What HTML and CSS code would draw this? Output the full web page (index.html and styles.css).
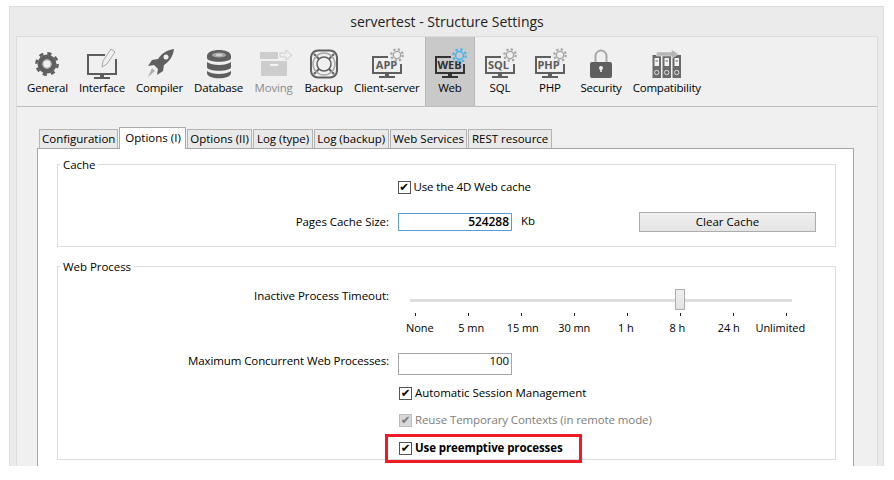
FILE: index.html
```html
<!DOCTYPE html>
<html lang="en">
<head>
<meta charset="utf-8">
<title>servertest - Structure Settings</title>
<link rel="stylesheet" href="styles.css">
</head>
<body>
<svg class="defs" width="0" height="0" aria-hidden="true">
  <defs>
    <symbol id="cog" viewBox="0 0 16 16">
      <circle cx="8" cy="8" r="6.6" fill="none" stroke="currentColor" stroke-width="2.4" stroke-dasharray="2.6 2.58"/>
      <circle cx="8" cy="8" r="4.2" fill="none" stroke="currentColor" stroke-width="1.6"/>
    </symbol>
    <symbol id="screen" viewBox="0 0 40 36">
      <path d="M21 12H6v16h28V19" fill="none" stroke="currentColor" stroke-width="2"/>
      <path d="M18 28h4v3h-4zM12 31h16v2H12z" fill="currentColor"/>
    </symbol>
  </defs>
</svg>
<main class="window">
  <header class="title">servertest - Structure Settings</header>
  <div class="pane">
    <nav class="toolbar">
      <a class="tool">
        <svg class="icon" viewBox="0 0 40 36">
          <circle cx="20" cy="19" r="10.6" fill="none" stroke="#5f5f5f" stroke-width="2.6" stroke-dasharray="4.2 4.13"/>
          <circle cx="20" cy="19" r="7" fill="none" stroke="#5f5f5f" stroke-width="5"/>
          <circle cx="20" cy="19" r="4" fill="none" stroke="#b5b5b5" stroke-width="1.2"/>
        </svg>
        <span>General</span>
      </a>
      <a class="tool">
        <svg class="icon" viewBox="0 0 40 36">
          <path d="M23 10H6v19h28V14" fill="none" stroke="#5c5c5c" stroke-width="2"/>
          <path d="M18 29h4v3h-4zM12 32h16v2H12z" fill="#5c5c5c"/>
          <path d="M29 4l4 3-8 12-5 3 1-6z" fill="#f0f0f0" stroke="#a8a8a8" stroke-width="1"/>
        </svg>
        <span>Interface</span>
      </a>
      <a class="tool">
        <svg class="icon" viewBox="0 0 40 36">
          <path d="M34 4c-7 1-12 4-16 10l-6 1-4 6 6-1 4 4-1 6 6-4 1-6c6-4 9-9 10-16z" fill="#5f5f5f"/>
          <circle cx="26" cy="12" r="2.500" fill="#f0f0f0"/>
          <path d="M12 23l3 3-7 6z" fill="#b0b0b0"/>
        </svg>
        <span>Compiler</span>
      </a>
      <a class="tool">
        <svg class="icon" viewBox="0 0 40 36">
          <path d="M8 11c0-8 24-8 24 0v2c0 5-24 5-24 0zM8 17c5 4 19 4 24 0v5c0 5-24 5-24 0zM8 26c5 4 19 4 24 0v2c0 7-24 7-24 0z" fill="#5f5f5f"/>
          <ellipse cx="20" cy="10" rx="7" ry="2.500" fill="#a5a5a5"/>
          <ellipse cx="20" cy="10" rx="3.500" ry="1.200" fill="#d0d0d0"/>
        </svg>
        <span>Database</span>
      </a>
      <a class="tool is-disabled">
        <svg class="icon" viewBox="0 0 40 36">
          <path d="M6 7h18v7H6zM7 16h26v15H7z" fill="#cdcdcd"/>
          <path d="M16 19h8v2h-8z" fill="#f4f4f4"/>
          <path d="M26 8h6V5l6 5-6 5v-3h-6z" fill="#eeeeee" stroke="#cdcdcd"/>
        </svg>
        <span>Moving</span>
      </a>
      <a class="tool">
        <svg class="icon" viewBox="0 0 40 36">
          <rect x="7" y="5.500" width="26" height="27" rx="7" fill="#f0f0f0" stroke="#5f5f5f" stroke-width="2"/>
          <path d="M10 9l5 5M30 9l-5 5M10 29l5-5M30 29l-5-5" stroke="#5f5f5f" stroke-width="2"/>
          <circle cx="20" cy="19" r="11" fill="none" stroke="#a8a8a8" stroke-width="1.500"/>
          <circle cx="20" cy="19" r="7" fill="#f0f0f0" stroke="#5f5f5f" stroke-width="1.500"/>
        </svg>
        <span>Backup</span>
      </a>
      <a class="tool">
        <svg class="icon" viewBox="0 0 40 36">
          <use href="#screen" class="ink-grey"/>
          <text class="badge" x="19.500" y="23.500" text-anchor="middle">APP</text>
          <use href="#cog" x="23" y="3" width="14" height="14" class="cog-grey"/>
        </svg>
        <span>Client-server</span>
      </a>
      <a class="tool is-active">
        <svg class="icon" viewBox="0 0 40 36">
          <use href="#screen" class="ink-dark"/>
          <text class="badge" x="19.500" y="23.500" text-anchor="middle">WEB</text>
          <use href="#cog" x="22" y="3" width="15" height="15" class="cog-blue"/>
        </svg>
        <span>Web</span>
      </a>
      <a class="tool">
        <svg class="icon" viewBox="0 0 40 36">
          <use href="#screen" class="ink-grey"/>
          <text class="badge" x="18.500" y="23.500" text-anchor="middle">SQL</text>
          <use href="#cog" x="23" y="3" width="14" height="14" class="cog-grey"/>
        </svg>
        <span>SQL</span>
      </a>
      <a class="tool">
        <svg class="icon" viewBox="0 0 40 36">
          <use href="#screen" class="ink-grey"/>
          <text class="badge" x="18.500" y="23.500" text-anchor="middle">PHP</text>
          <use href="#cog" x="23" y="3" width="14" height="14" class="cog-grey"/>
        </svg>
        <span>PHP</span>
      </a>
      <a class="tool">
        <svg class="icon" viewBox="0 0 40 36">
          <path d="M14.500 17v-6a5.500 5.500 0 0 1 11 0v6" fill="none" stroke="#a8a8a8" stroke-width="2"/>
          <rect x="9" y="17" width="22" height="16" rx="2" fill="#5f5f5f"/>
          <circle cx="20" cy="23" r="2" fill="#f0f0f0"/>
          <path d="M19.200 23h1.600v4h-1.600z" fill="#f0f0f0"/>
        </svg>
        <span>Security</span>
      </a>
      <a class="tool">
        <svg class="icon" viewBox="0 0 40 36">
          <path d="M5.500 10H14v23H5.500zM15.500 10H24v23h-8.500zM25.500 10H34v23h-8.500z" fill="#6a6a6a"/>
          <path d="M7.500 13h4.500v8H7.500zM17.500 13H22v8h-4.500zM27.500 13H32v8h-4.500z" fill="#f0f0f0"/>
          <path d="M8.500 16h2.500M18.500 16H21M28.500 16H31" stroke="#666"/>
          <circle cx="9.700" cy="27.500" r="2.200" fill="#6a6a6a" stroke="#ddd"/>
          <circle cx="19.700" cy="27.500" r="2.200" fill="#6a6a6a" stroke="#ddd"/>
          <circle cx="29.700" cy="27.500" r="2.200" fill="#6a6a6a" stroke="#ddd"/>
          <path d="M9.500 7h15V4.500l7 4.500-7 4.500V11h-15z" fill="#b5b5b5" stroke="#f0f0f0" stroke-width=".5"/>
        </svg>
        <span>Compatibility</span>
      </a>
    </nav>

    <section class="tabbed">
      <div class="tabs">
        <span class="tab">Configuration</span>
        <span class="tab is-current">Options (I)</span>
        <span class="tab">Options (II)</span>
        <span class="tab">Log (type)</span>
        <span class="tab">Log (backup)</span>
        <span class="tab">Web Services</span>
        <span class="tab">REST resource</span>
      </div>
      <div class="sheet">
        <fieldset class="group group-cache">
          <legend>Cache</legend>
          <div class="row row-web-cache">
            <span></span>
            <label class="check"><span class="box">&#10004;</span>Use the 4D Web cache</label>
          </div>
          <div class="row row-size">
            <span class="field-label">Pages Cache Size:</span>
            <div class="controls">
              <output class="input input-focus">524288</output>
              <span class="unit">Kb</span>
              <button class="button" type="button">Clear Cache</button>
            </div>
          </div>
        </fieldset>

        <fieldset class="group group-process">
          <legend>Web Process</legend>
          <div class="row row-timeout">
            <span class="field-label">Inactive Process Timeout:</span>
          </div>
          <div class="slider">
            <div class="track"><span class="thumb"></span></div>
            <div class="ticks"><i></i><i></i><i></i><i></i><i></i><i></i><i></i><i></i></div>
            <div class="stops">
              <span>None</span><span>5 mn</span><span>15 mn</span><span>30 mn</span><span>1 h</span><span>8 h</span><span>24 h</span><span>Unlimited</span>
            </div>
          </div>
          <div class="row row-max">
            <span class="field-label">Maximum Concurrent Web Processes:</span>
            <output class="input input-plain">100</output>
          </div>
          <div class="row row-session">
            <span></span>
            <label class="check"><span class="box">&#10004;</span>Automatic Session Management</label>
          </div>
          <div class="row row-reuse">
            <span></span>
            <label class="check is-dim"><span class="box">&#10004;</span>Reuse Temporary Contexts (in remote mode)</label>
          </div>
          <div class="row row-preempt">
            <span></span>
            <label class="check is-strong"><span class="box">&#10004;</span>Use preemptive processes</label>
          </div>
        </fieldset>
      </div>
    </section>
  </div>
</main>
</body>
</html>
```
FILE: styles.css
```css
*, *::after { box-sizing: border-box; }

html, body {
  margin: 0;
  background: #fff;
}

body {
  width: 894px;
  height: 480px;
  overflow: hidden;
  padding: 6px 10px 0 9px;
  font: 11.5px/16px "Open Sans", "Noto Sans", sans-serif;
  color: #000;
}

.defs { position: absolute; }

.window {
  height: 460px;
  display: flex;
  flex-direction: column;
  background: #ebebeb;
  border: 1px solid #dcdcdc;
  border-bottom: 0;
  padding: 0 5px 0 6px;
}

.title {
  height: 29px;
  flex: none;
  display: flex;
  align-items: center;
  justify-content: center;
  font-size: 14px;
  color: #222;
}

.pane {
  flex: 1;
  min-height: 0;
  display: flex;
  flex-direction: column;
  background: #f0f0f0;
  border: 1px solid #dcdcdc;
  border-bottom: 0;
}

.toolbar {
  height: 70px;
  flex: none;
  display: flex;
  padding-left: 4.500px;
  border-bottom: 1px solid #bdbdbd;
  letter-spacing: -.2px;
}

.tool {
  min-width: 50px;
  padding-top: 8px;
  display: flex;
  flex-direction: column;
  align-items: center;
  white-space: nowrap;
}

.tool span { line-height: 16px; margin-top: -1px; padding: 0 5.500px; }
.tool .icon { width: 40px; height: 36px; flex: none; }
.tool.is-disabled span { color: #8a8a8a; }
.tool.is-active { background: #c9c9c9; border-left: 1px solid #b9b9b9; border-right: 1px solid #b9b9b9; }

.ink-grey { color: #5f5f5f; }
.ink-dark { color: #333; }
.cog-grey { color: #a3a3a3; }
.cog-blue { color: #45b4ee; }

.badge {
  font: 700 11px "Open Sans", sans-serif;
  letter-spacing: 0;
  fill: #5a5a5a;
}
.is-active .badge { fill: #2e2e2e; }

.tabbed {
  flex: 1;
  min-height: 0;
  display: flex;
  flex-direction: column;
  padding: 22px 23px 0 20px;
}

.tabs {
  height: 19px;
  flex: none;
  display: flex;
  gap: 1px;
  padding-left: 2px;
  position: relative;
  z-index: 1;
}

.tab {
  height: 19px;
  padding: 0 2.500px;
  display: flex;
  align-items: center;
  background: #e9e9e9;
  border: 1px solid #b4b4b4;
  border-bottom: 0;
  white-space: nowrap;
}

.tab:first-child { padding: 0 2px; }

.tab.is-current {
  height: 22px;
  margin-top: -2px;
  padding: 0 4px 2px 5px;
  background: #fff;
  border-color: #aaa;
}

.sheet {
  flex: 1;
  min-height: 0;
  background: #fff;
  border: 1px solid #a6a6a6;
  border-bottom: 0;
  padding: 6px 17px 0 19px;
  letter-spacing: -.05px;
}

.group {
  margin: 0;
  padding: 0;
  min-width: 0;
  border: 1px solid #dcdcdc;
}

.group legend {
  margin-left: 2px;
  padding: 2px 3px 0;
  line-height: 16px;
}

.group-cache { height: 92px; margin-bottom: 10px; }
.group-process { height: 203px; }

.row {
  display: grid;
  grid-template-columns: 331px 1fr;
  column-gap: 9px;
  align-items: center;
}

.field-label { text-align: right; white-space: nowrap; }

.row-web-cache { margin: 6px 0 0 -1.500px; height: 16px; letter-spacing: -.12px; }
.row-size { margin-top: 17px; }

.controls { display: flex; align-items: center; }

.input {
  display: block;
  width: 114px;
  background: #fff;
  text-align: right;
  padding-right: 2px;
}

.input-focus {
  height: 18px;
  line-height: 16px;
  border: 1px solid #5a9bd8;
  font-weight: 600;
  font-size: 12px;
}

.input-plain {
  height: 22px;
  line-height: 14px;
  border: 1px solid #a6a6a6;
}

.unit { margin: -3px 0 0 9px; width: 118px; }

.button {
  width: 177px;
  height: 20px;
  padding: 0;
  font: inherit;
  color: inherit;
  background: linear-gradient(#f0f0f0, #e4e4e4);
  border: 1px solid #acacac;
}

.row-timeout { margin-top: 13px; }

.slider {
  margin-left: 352px;
  width: 382px;
  margin-top: -15px;
}

.track {
  position: relative;
  height: 3px;
  margin-top: 10px;
  background: #dedede;
}

.thumb {
  position: absolute;
  left: 265px;
  top: -10px;
  width: 10px;
  height: 21px;
  background: linear-gradient(#f0f0f0, #e4e4e4);
  border: 1px solid #acacac;
}

.ticks {
  display: grid;
  grid-template-columns: repeat(8, 53px);
  margin: 11px 0 0 5px;
  height: 3px;
}

.ticks i {
  display: block;
  width: 1px;
  height: 3px;
  background: #222;
}

.stops {
  display: grid;
  grid-template-columns: repeat(8, 51.500px);
  margin: 4px 0 0 -16px;
  height: 16px;
  font-size: 11px;
}

.stops span { text-align: center; white-space: nowrap; }

.row-max { margin-top: 17px; align-items: start; letter-spacing: -.1px; }
.row-session { margin-top: 10px; height: 16px; letter-spacing: -.05px; }
.row-reuse { margin-top: 11px; height: 16px; }
.row-preempt { margin-top: 12px; height: 16px; }

.check {
  display: flex;
  align-items: center;
  white-space: nowrap;
}

.box {
  width: 13px;
  height: 13px;
  flex: none;
  margin: 0 3px 0 1px;
  display: flex;
  align-items: center;
  justify-content: center;
  border: 1px solid #555;
  background: #fff;
  font: 11.500px/11px "DejaVu Sans", sans-serif;
  color: #000;
}

.is-dim { color: #7d7d7d; letter-spacing: -.1px; }
.is-dim .box { background: #d8d8d8; border-color: #bcbcbc; color: #777; }

.is-strong { font-weight: 700; position: relative; letter-spacing: -.1px; }
.is-strong::after {
  content: "";
  position: absolute;
  left: -13px;
  top: -6.500px;
  width: 197px;
  height: 29px;
  border: 3px solid #ed1c24;
  pointer-events: none;
}
```
